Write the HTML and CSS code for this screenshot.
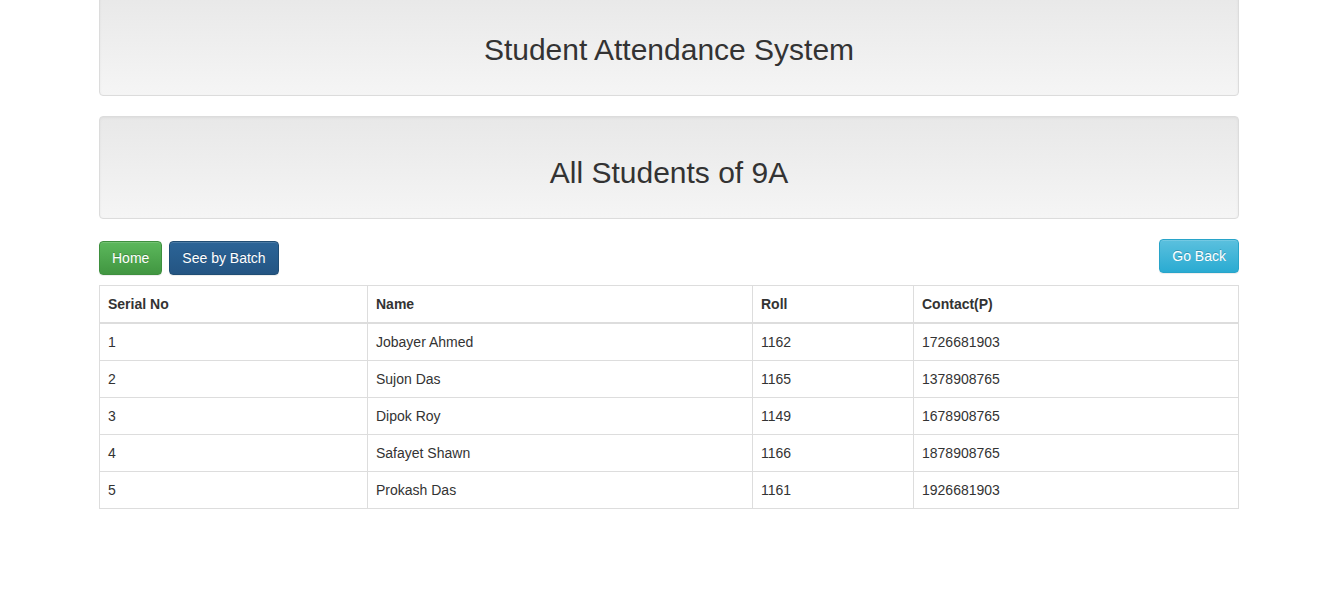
FILE: index.html
```html
<!DOCTYPE html>
<html>
<head>
<meta charset="utf-8">
<title>Student Attendance System</title>
<link rel="stylesheet" href="styles.css">
</head>
<body>
<div class="container">
  <div class="well well-top">
    <h2>Student Attendance System</h2>
  </div>
  <div class="well">
    <h2>All Students of 9A</h2>
  </div>
  <div class="actions">
    <div class="left-group">
      <a class="btn btn-success" href="#">Home</a>
      <a class="btn btn-primary" href="#">See by Batch</a>
    </div>
    <a class="btn btn-info" href="#">Go Back</a>
  </div>
  <table class="table">
    <thead>
      <tr>
        <th class="c1">Serial No</th>
        <th class="c2">Name</th>
        <th class="c3">Roll</th>
        <th class="c4">Contact(P)</th>
      </tr>
    </thead>
    <tbody>
      <tr><td>1</td><td>Jobayer Ahmed</td><td>1162</td><td>1726681903</td></tr>
      <tr><td>2</td><td>Sujon Das</td><td>1165</td><td>1378908765</td></tr>
      <tr><td>3</td><td>Dipok Roy</td><td>1149</td><td>1678908765</td></tr>
      <tr><td>4</td><td>Safayet Shawn</td><td>1166</td><td>1878908765</td></tr>
      <tr><td>5</td><td>Prokash Das</td><td>1161</td><td>1926681903</td></tr>
    </tbody>
  </table>
</div>
</body>
</html>
```
FILE: styles.css
```css
* { box-sizing: border-box; }
html, body { margin: 0; padding: 0; }
body {
  background: #fff;
  color: #333;
  font-family: "Liberation Sans", Arial, Helvetica, sans-serif;
  font-size: 14px;
  line-height: 20px;
  padding-right: 2px;
}
.container {
  width: 1140px;
  margin: 0 auto;
}
.well {
  border: 1px solid #dcdcdc;
  border-radius: 4px;
  background: linear-gradient(to bottom, #e8e8e8 0%, #f5f5f5 100%);
  box-shadow: inset 0 1px 3px rgba(0,0,0,.05), 0 1px 0 rgba(255,255,255,.1);
  padding: 19px;
  margin-bottom: 20px;
  text-align: center;
}
.well-top { margin-top: -7px; }
.well h2 {
  margin: 20px 0 10px;
  font-size: 30px;
  font-weight: 500;
  line-height: 33px;
  color: #333;
}
.actions {
  display: flex;
  justify-content: space-between;
  align-items: flex-start;
}
.left-group {
  display: flex;
  gap: 7px;
  margin-top: 2px;
}
.btn {
  display: inline-block;
  padding: 6px 12px;
  font-size: 14px;
  line-height: 20px;
  border: 1px solid transparent;
  border-radius: 4px;
  color: #fff;
  text-decoration: none;
  text-shadow: 0 -1px 0 rgba(0,0,0,.2);
  box-shadow: inset 0 1px 0 rgba(255,255,255,.15), 0 1px 1px rgba(0,0,0,.075);
  white-space: nowrap;
}
.btn-success {
  background: linear-gradient(to bottom, #5cb85c 0%, #419641 100%);
  border-color: #3e8f3e;
}
.btn-primary {
  background: linear-gradient(to bottom, #2b6497 0%, #245583 100%);
  border-color: #204d74;
}
.btn-info {
  background: linear-gradient(to bottom, #5bc0de 0%, #2aabd2 100%);
  border-color: #28a4c9;
}
.table {
  width: 100%;
  margin-top: 10px;
  border-collapse: collapse;
  border: 1px solid #ddd;
}
.table th, .table td {
  border: 1px solid #ddd;
  padding: 8px;
  line-height: 20px;
  text-align: left;
  vertical-align: top;
}
.table th {
  font-weight: bold;
  border-bottom-width: 2px;
}
.c1 { width: 268px; }
.c2 { width: 385px; }
.c3 { width: 161px; }
.c4 { width: auto; }
```
